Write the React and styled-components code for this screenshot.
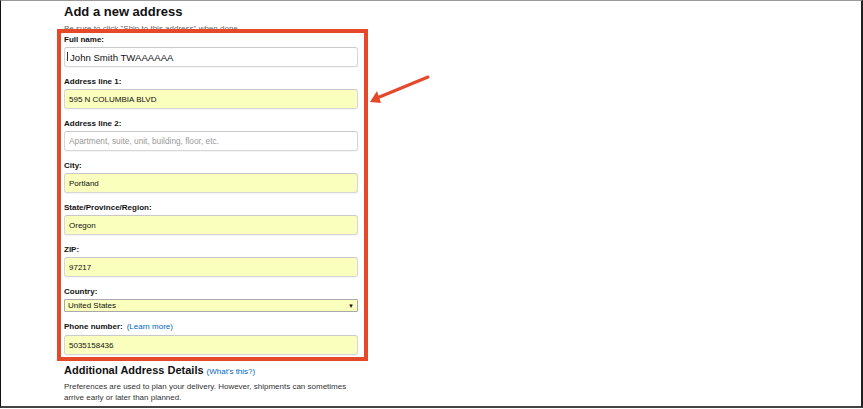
import React from 'react';
import styled, { createGlobalStyle } from 'styled-components';

const GlobalStyle = createGlobalStyle`
  html, body {
    margin: 0;
    padding: 0;
    background: #ffffff;
  }
  body {
    font-family: Arial, "Liberation Sans", sans-serif;
    color: #111111;
  }
`;

const Frame = styled.div`
  position: relative;
  box-sizing: border-box;
  width: 863px;
  height: 408px;
  border-top: 1px solid #9a9a9a;
  border-left: 1px solid #111111;
  border-right: 2px solid #222222;
  border-bottom: 2px solid #444444;
  padding: 3px 0 0 63px;
  overflow: hidden;
`;

const Column = styled.div`
  width: 300px;
  display: flex;
  flex-direction: column;
`;

const Title = styled.h1`
  margin: 0;
  font-size: 13px;
  line-height: 15px;
  font-weight: bold;
  color: #111111;
`;

const Hint = styled.div`
  margin-top: 5px;
  font-size: 8px;
  line-height: 9px;
  color: #666666;
`;

const Highlight = styled.div`
  position: relative;
  box-sizing: border-box;
  width: 311px;
  margin: -4px 0 0 -7px;
  padding: 2px 6px 2px 3px;
  border: 4px solid #e6492a;
  background: transparent;
  display: flex;
  flex-direction: column;
  gap: 10px;
`;

const Field = styled.div`
  position: relative;
  display: flex;
  flex-direction: column;
`;

const Label = styled.label`
  font-size: 8px;
  line-height: 10px;
  font-weight: bold;
  color: #111111;
  margin-bottom: ${p => p.$gap || 2}px;
`;

const Link = styled.a`
  font-weight: normal;
  color: #0066c0;
  text-decoration: none;
  margin-left: 4px;
`;

const Input = styled.input`
  box-sizing: border-box;
  width: 100%;
  height: 20px;
  margin: 0;
  padding: 0 4px 0 ${p => (p.$large ? 5 : 4)}px;
  font-family: Arial, "Liberation Sans", sans-serif;
  font-size: ${p => (p.$large ? '9.6px' : '8px')};
  color: #111111;
  background: ${p => (p.$filled ? '#faffbd' : '#ffffff')};
  border: 1px solid #d6d6d6;
  border-top-color: #c9c9c9;
  border-radius: 3px;
  box-shadow: 0 1px 0 rgba(0, 0, 0, 0.04);
  outline: none;
  &::placeholder {
    font-size: 8.3px;
    color: #9a9a9a;
  }
`;

const TextCursor = styled.span`
  position: absolute;
  left: 3px;
  bottom: 6px;
  width: 1px;
  height: 9px;
  background: #333333;
`;

const Select = styled.div`
  box-sizing: border-box;
  height: 13px;
  padding: 0 3px;
  display: flex;
  align-items: center;
  justify-content: space-between;
  font-size: 8px;
  color: #111111;
  background: #faffbd;
  border: 1px solid #a9a9a9;
  border-radius: 1px;
`;

const Caret = styled.span`
  font-size: 6px;
  color: #111111;
`;

const SubTitle = styled.h2`
  margin: 3px 0 0;
  font-size: 11px;
  line-height: 13px;
  font-weight: bold;
  color: #111111;
`;

const SmallLink = styled.a`
  font-size: 8px;
  font-weight: normal;
  color: #0066c0;
  text-decoration: none;
  margin-left: 3px;
`;

const Note = styled.p`
  margin: 3px 0 0;
  font-size: 8px;
  line-height: 11px;
  color: #333333;
`;

const Arrow = styled.svg`
  position: absolute;
  left: 359px;
  top: 64px;
`;

const fields = [
  { label: 'Full name:', value: 'John Smith TWAAAAAA', focused: true },
  { label: 'Address line 1:', value: '595 N COLUMBIA BLVD', filled: true },
  { label: 'Address line 2:', placeholder: 'Apartment, suite, unit, building, floor, etc.' },
  { label: 'City:', value: 'Portland', filled: true },
  { label: 'State/Province/Region:', value: 'Oregon', filled: true },
  { label: 'ZIP:', value: '97217', filled: true },
];

const App = () => {
  return (
    <>
      <GlobalStyle />
      <Frame>
        <Column>
          <Title>Add a new address</Title>
          <Hint>Be sure to click "Ship to this address" when done.</Hint>
          <Highlight>
            {fields.map(f => (
              <Field key={f.label}>
                <Label>{f.label}</Label>
                <Input
                  readOnly
                  $filled={f.filled}
                  $large={f.focused}
                  value={f.value || ''}
                  placeholder={f.placeholder}
                />
                {f.focused && <TextCursor />}
              </Field>
            ))}
            <Field>
              <Label>Country:</Label>
              <Select>
                United States
                <Caret>▼</Caret>
              </Select>
            </Field>
            <Field>
              <Label $gap={3}>
                Phone number:
                <Link href="#">(Learn more)</Link>
              </Label>
              <Input readOnly $filled value="5035158436" />
            </Field>
          </Highlight>
          <SubTitle>
            Additional Address Details
            <SmallLink href="#">(What's this?)</SmallLink>
          </SubTitle>
          <Note>
            Preferences are used to plan your delivery. However, shipments can sometimes
            arrive early or later than planned.
          </Note>
        </Column>
        <Arrow width="76" height="46" viewBox="0 0 76 46">
          <line x1="68" y1="12" x2="17" y2="33" stroke="#e6492a" strokeWidth="3" strokeLinecap="round" />
          <polygon points="10,37 17,26 21,38" fill="#e6492a" />
        </Arrow>
      </Frame>
    </>
  );
};

export default App;
